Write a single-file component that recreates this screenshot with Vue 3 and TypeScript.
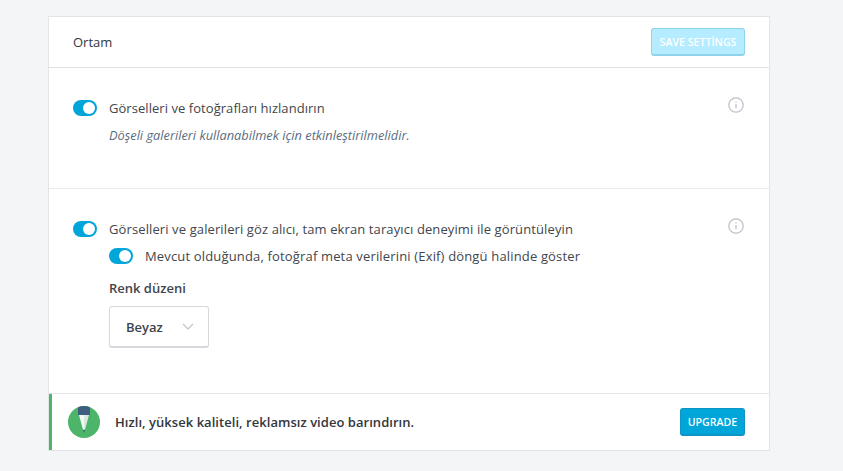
<script setup lang="ts">
const iconPath = 'M8 7v4.2M8 4.6v.9'
</script>

<template>
  <div class="page">
    <div class="card">
      <header class="head">
        <span class="title">Ortam</span>
        <button class="btn save">SAVE SETTİNGS</button>
      </header>

      <section class="sec first">
        <div class="grow">
          <div class="row">
            <span class="toggle"><i></i></span>
            <span class="label l1">Görselleri ve fotoğrafları hızlandırın</span>
          </div>
          <p class="note">Döşeli galerileri kullanabilmek için etkinleştirilmelidir.</p>
        </div>
        <svg class="info" viewBox="0 0 16 16" width="16" height="16">
          <circle cx="8" cy="8" r="7.2" />
          <path :d="iconPath" />
        </svg>
      </section>

      <section class="sec second">
        <div class="grow">
          <div class="row">
            <span class="toggle"><i></i></span>
            <span class="label l2">Görselleri ve galerileri göz alıcı, tam ekran tarayıcı deneyimi ile görüntüleyin</span>
          </div>
          <div class="sub">
            <div class="row">
              <span class="toggle"><i></i></span>
              <span class="label l3">Mevcut olduğunda, fotoğraf meta verilerini (Exif) döngü halinde göster</span>
            </div>
            <div class="scheme">Renk düzeni</div>
            <div class="select">
              <span>Beyaz</span>
              <svg viewBox="0 0 12 7" width="12" height="7"><path d="M1 1l5 5 5-5" /></svg>
            </div>
          </div>
        </div>
        <svg class="info" viewBox="0 0 16 16" width="16" height="16">
          <circle cx="8" cy="8" r="7.2" />
          <path :d="iconPath" />
        </svg>
      </section>

      <footer class="foot">
        <svg class="logo" viewBox="0 0 32 32" width="32" height="32">
          <defs>
            <clipPath id="logo-disc"><circle cx="16" cy="16" r="16" /></clipPath>
          </defs>
          <circle cx="16" cy="16" r="16" fill="#4cb56a" />
          <g clip-path="url(#logo-disc)">
            <path d="M10 0h12v9H10z" fill="#3f5f80" />
            <path d="M11 9h5v15l-1.2-1z" fill="#f4f8f5" />
            <path d="M16 9h5l-3.8 14-1.2 1z" fill="#dbe7e2" />
            <path d="M15 24h2l-1 3z" fill="#3f5f80" />
          </g>
        </svg>
        <strong class="promo">Hızlı, yüksek kaliteli, reklamsız video barındırın.</strong>
        <button class="btn up">UPGRADE</button>
      </footer>
    </div>
  </div>
</template>

<style>
html, body { margin: 0; background: #f3f5f7; }
</style>

<style scoped>
.page {
  height: 471px;
  box-sizing: border-box;
  padding: 16px 73px 0 48px;
  background: #f3f5f7;
  font-family: "Open Sans", "Noto Sans", sans-serif;
  color: #3c434a;
}
.card {
  height: 435px;
  box-sizing: border-box;
  background: #fff;
  border: 1px solid #e2e4e7;
  display: flex;
  flex-direction: column;
}
.head {
  height: 51px;
  flex: none;
  box-sizing: border-box;
  padding: 0 24px;
  display: flex;
  align-items: center;
  justify-content: space-between;
  border-bottom: 1px solid #dfe1e4;
}
.title { font-size: 13px; color: #32373c; }
.btn {
  height: 28px;
  box-sizing: border-box;
  padding: 0;
  border-radius: 3px;
  font-family: inherit;
  font-size: 10.6px;
  font-weight: 600;
  color: #fff;
  text-align: center;
}
.save {
  width: 94px;
  background: #b5ecff;
  border: 1px solid #8fd3ea;
  border-bottom-width: 2px;
}
.up {
  width: 65px;
  background: #00a5d9;
  border: 1px solid #0f95c2;
  border-bottom-width: 2px;
}
.sec {
  display: flex;
  align-items: flex-start;
  box-sizing: border-box;
  padding: 29px 25px 0 24px;
  border-bottom: 1px solid #e8eaed;
}
.first { height: 121px; }
.second { height: 205px; border-bottom-color: #e2e4e7; }
.grow { flex: 1; }
.row { display: flex; align-items: center; height: 22px; }
.toggle {
  flex: none;
  width: 22px;
  height: 16px;
  border-radius: 8px;
  background: #00a5d9;
  display: flex;
  align-items: center;
  justify-content: flex-end;
  padding-right: 2px;
  box-sizing: content-box;
}
.toggle i {
  display: block;
  width: 12px;
  height: 12px;
  border-radius: 50%;
  background: #fff;
}
.label { font-size: 13px; margin-left: 12px; line-height: 22px; color: #3f464d; }
.l1 { letter-spacing: 0.05px; }
.l2 { letter-spacing: 0.11px; }
.l3 { letter-spacing: 0.16px; }
.note {
  margin: 7px 0 0 36px;
  font-size: 12.8px;
  line-height: 18px;
  font-style: italic;
  color: #5b6d82;
}
.info {
  flex: none;
  fill: none;
  stroke: #b9bfc6;
  stroke-width: 1.2;
}
.sub { margin-left: 36px; margin-top: 5px; }
.scheme {
  margin-top: 12px;
  font-size: 13px;
  font-weight: 600;
  line-height: 18px;
  color: #3f464d;
}
.select {
  margin-top: 9px;
  width: 100px;
  height: 42px;
  box-sizing: border-box;
  border: 1px solid #d5d8dc;
  border-bottom-width: 2px;
  border-radius: 3px;
  padding: 0 14px 0 16px;
  display: flex;
  align-items: center;
  justify-content: space-between;
  font-size: 13px;
  font-weight: 600;
  color: #3c434a;
}
.select svg { fill: none; stroke: #c3c8ce; stroke-width: 1.3; }
.foot {
  flex: 1;
  display: flex;
  align-items: center;
  box-sizing: border-box;
  padding: 0 24px 0 16px;
  border-left: 3px solid #4cb56a;
}
.logo { flex: none; }
.promo {
  flex: 1;
  margin-left: 15px;
  font-size: 13px;
  font-weight: 600;
  letter-spacing: 0.04px;
  color: #32373c;
}
</style>
